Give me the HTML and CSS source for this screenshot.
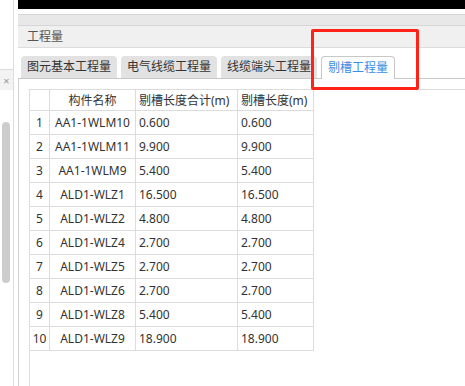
FILE: index.html
```html
<!DOCTYPE html>
<html lang="zh-CN">
<head>
  <meta charset="UTF-8" />
  <title>工程量</title>
  <link rel="stylesheet" href="styles.css">
</head>
<body>
  <div class="app">
    <aside class="side">
      <div class="side-top"></div>
      <div class="side-bar"><span class="close">&#215;</span></div>
      <div class="side-track"><div class="thumb"></div></div>
    </aside>

    <main class="main">
      <div class="topbar"></div>
      <div class="strip"></div>
      <div class="title">工程量</div>

      <div class="tabs">
        <div class="tab">图元基本工程量</div>
        <div class="tab">电气线缆工程量</div>
        <div class="tab">线缆端头工程量</div>
        <div class="tab active">剔槽工程量</div>
      </div>

      <div class="panel">
        <div class="grid">
          <table>
            <colgroup>
              <col class="c-no"><col class="c-name"><col class="c-sum"><col class="c-len">
            </colgroup>
            <thead>
              <tr>
                <th></th>
                <th class="center">构件名称</th>
                <th>剔槽长度合计(m)</th>
                <th>剔槽长度(m)</th>
              </tr>
            </thead>
            <tbody id="rows"></tbody>
          </table>
        </div>
      </div>

      <div class="mark"></div>
    </main>
  </div>

  <script>
    const data = [
      ['AA1-1WLM10', '0.600'],
      ['AA1-1WLM11', '9.900'],
      ['AA1-1WLM9', '5.400'],
      ['ALD1-WLZ1', '16.500'],
      ['ALD1-WLZ2', '4.800'],
      ['ALD1-WLZ4', '2.700'],
      ['ALD1-WLZ5', '2.700'],
      ['ALD1-WLZ6', '2.700'],
      ['ALD1-WLZ8', '5.400'],
      ['ALD1-WLZ9', '18.900']
    ];

    const rows = document.getElementById('rows');
    rows.innerHTML = data.map((r, i) => `
      <tr>
        <td class="center">${i + 1}</td>
        <td class="center">${r[0]}</td>
        <td>${r[1]}</td>
        <td>${r[1]}</td>
      </tr>`).join('');
  </script>
</body>
</html>
```

FILE: styles.css
```css
body {
  margin: 0;
  width: 465px;
  height: 386px;
  overflow: hidden;
  background: #fff;
  font-family: 'Noto Sans', 'Noto Sans CJK SC', sans-serif;
  font-size: 12px;
  color: #333;
}

.app {
  display: flex;
  height: 386px;
}

/* left docked strip */
.side {
  width: 13px;
  flex: none;
  display: flex;
  flex-direction: column;
  border-right: 1px solid #dcdcdc;
}

.side-top {
  height: 69px;
  border-bottom: 1px solid #dcdcdc;
}

.side-bar {
  height: 20px;
  display: flex;
  align-items: center;
  justify-content: center;
  background: #f3f3f3;
}

.close {
  color: #999;
  font-size: 11px;
  line-height: 1;
}

.side-track {
  flex: 1;
  padding: 32px 0 0 2px;
}

.thumb {
  width: 8px;
  height: 161px;
  border-radius: 4px;
  background: #cdcdcd;
}

/* main window */
.main {
  position: relative;
  flex: 1;
  margin-left: 4px;
  display: flex;
  flex-direction: column;
}

.topbar {
  height: 9px;
  background: #000;
}

.strip {
  margin-top: 5px;
  height: 10px;
  background: #e8e8e8;
  border-top: 1px solid #d6d6d6;
  border-bottom: 1px solid #d6d6d6;
}

.title {
  height: 21px;
  line-height: 21px;
  padding-left: 9px;
  background: #f0f0f0;
  border-bottom: 1px solid #dcdcdc;
  color: #555;
}

.tabs {
  margin-top: 7px;
  display: flex;
  align-items: flex-end;
  gap: 4px;
  padding-left: 3px;
  height: 23px;
  border-bottom: 1px solid #c8c8c8;
}

.tab {
  height: 22px;
  line-height: 22px;
  padding: 0 6px;
  background: #e2e2e2;
  border-radius: 4px 4px 0 0;
  color: #333;
  white-space: nowrap;
}

.tab.active {
  height: 22px;
  margin-bottom: -1px;
  background: #fff;
  border: 1px solid #c8c8c8;
  border-bottom: none;
  color: #3a8ee6;
}

.panel {
  flex: 1;
  border-left: 1px solid #d0d0d0;
  padding: 10px 0 0 10px;
}

.grid {
  height: 100%;
  border-top: 1px solid #dcdcdc;
  border-left: 1px solid #dcdcdc;
}

table {
  border-collapse: collapse;
  table-layout: fixed;
  width: 284px;
  margin: -1px 0 0 -1px;
}

.c-no { width: 20px; }
.c-name { width: 86px; }
.c-sum { width: 102px; }
.c-len { width: 76px; }

th, td {
  border: 1px solid #dcdcdc;
  padding: 0 0 0 3px;
  text-align: left;
  font-weight: normal;
  white-space: nowrap;
  overflow: hidden;
}

th {
  height: 20px;
}

td {
  height: 23px;
}

.center {
  text-align: center;
  padding: 0;
}

/* red highlight box drawn over the tab */
.mark {
  position: absolute;
  left: 293px;
  top: 29px;
  width: 102px;
  height: 55px;
  border: 3px solid #ff2219;
  border-radius: 2px;
}
```
